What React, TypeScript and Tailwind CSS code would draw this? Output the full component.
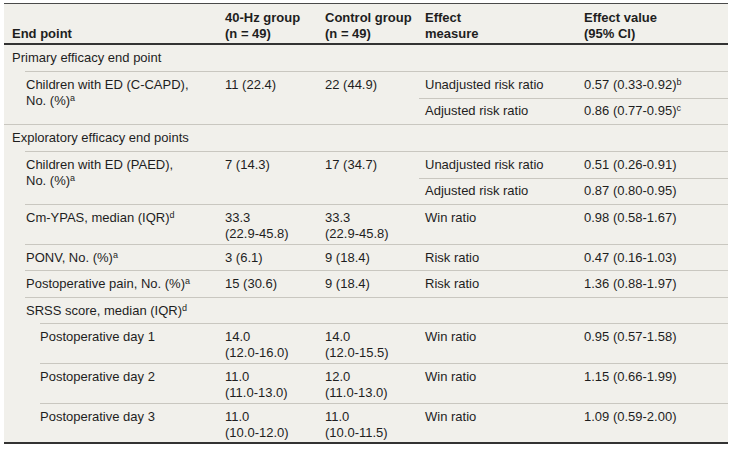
import React from "react";

const Sup = ({ c }: { c: string }) => <sup className="text-[9px]">{c}</sup>;

const D0 = () => <div className="h-px shrink-0 bg-[#c9c7c0]" />;
const D1 = () => <div className="h-px shrink-0 ml-[21px] bg-[#c9c7c0]" />;
const D2 = () => <div className="h-px shrink-0 ml-[36px] bg-[#c9c7c0]" />;

type CellProps = { children?: React.ReactNode };

const C2 = ({ children }: CellProps) => (
  <div className="w-[100px] shrink-0 pl-[6px] pt-[5px]">{children}</div>
);
const C3 = ({ children }: CellProps) => (
  <div className="w-[100px] shrink-0 pl-[6px] pt-[5px]">{children}</div>
);
const C4 = ({ children, pt = "pt-[5px]" }: CellProps & { pt?: string }) => (
  <div className={`w-[159px] shrink-0 pl-[6px] ${pt}`}>{children}</div>
);
const C5 = ({ children, pt = "pt-[5px]" }: CellProps & { pt?: string }) => (
  <div className={`w-[150px] shrink-0 pl-[6px] ${pt}`}>{children}</div>
);

function Section({ title }: { title: string }) {
  return (
    <div className="flex flex-col">
      <div className="h-[26px] pl-[8px] pt-[5px]">{title}</div>
      <D1 />
    </div>
  );
}

function SplitRow({
  label,
  a,
  b,
  r1,
  r2,
  divider,
}: {
  label: React.ReactNode;
  a: string;
  b: string;
  r1: [React.ReactNode, React.ReactNode];
  r2: [React.ReactNode, React.ReactNode];
  divider: React.ReactNode;
}) {
  return (
    <div className="flex flex-col">
      <div className="flex h-[52px]">
        <div className="w-[215px] shrink-0 pl-[22px] pt-[5px]">{label}</div>
        <C2>{a}</C2>
        <C3>{b}</C3>
        <div className="flex w-[309px] shrink-0 flex-col">
          <div className="flex h-[26px]">
            <C4>{r1[0]}</C4>
            <C5>{r1[1]}</C5>
          </div>
          <div className="h-px bg-[#c9c7c0]" />
          <div className="flex h-[25px]">
            <C4 pt="pt-[4px]">{r2[0]}</C4>
            <C5 pt="pt-[4px]">{r2[1]}</C5>
          </div>
        </div>
      </div>
      {divider}
    </div>
  );
}

function Row({
  h,
  pl,
  label,
  a,
  b,
  m,
  v,
  divider,
}: {
  h: string;
  pl: string;
  label: React.ReactNode;
  a?: React.ReactNode;
  b?: React.ReactNode;
  m?: React.ReactNode;
  v?: React.ReactNode;
  divider?: React.ReactNode;
}) {
  return (
    <div className="flex flex-col">
      <div className={`flex ${h}`}>
        <div className={`w-[215px] shrink-0 pt-[5px] ${pl}`}>{label}</div>
        <C2>{a}</C2>
        <C3>{b}</C3>
        <C4>{m}</C4>
        <C5>{v}</C5>
      </div>
      {divider}
    </div>
  );
}

export default function App() {
  return (
    <div className="min-h-[449px] w-[736px] bg-white pt-[3px] pl-[4px] font-['Liberation_Sans',Arial,sans-serif] text-[13px] leading-[16px] text-[#1e1e1e]">
      <div className="w-[724px] border-t border-b-2 border-t-[#4a4a4a] border-b-[#333333] bg-[#f1f0eb]">
        {/* Header */}
        <div className="flex h-[41px] border-b-2 border-[#333333] font-bold">
          <div className="flex w-[215px] shrink-0 flex-col justify-end pb-[1px] pl-[8px]">
            <div>End point</div>
          </div>
          <div className="flex w-[100px] shrink-0 flex-col justify-end pb-[1px] pl-[6px]">
            <div>40-Hz group</div>
            <div>(n = 49)</div>
          </div>
          <div className="flex w-[100px] shrink-0 flex-col justify-end pb-[1px] pl-[6px]">
            <div>Control group</div>
            <div>(n = 49)</div>
          </div>
          <div className="flex w-[159px] shrink-0 flex-col justify-end pb-[1px] pl-[6px]">
            <div>Effect</div>
            <div>measure</div>
          </div>
          <div className="flex w-[150px] shrink-0 flex-col justify-end pb-[1px] pl-[6px]">
            <div>Effect value</div>
            <div>(95% CI)</div>
          </div>
        </div>

        <Section title="Primary efficacy end point" />
        <SplitRow
          label={
            <>
              <div>Children with ED (C-CAPD),</div>
              <div>
                No. (%)<Sup c="a" />
              </div>
            </>
          }
          a="11 (22.4)"
          b="22 (44.9)"
          r1={[
            "Unadjusted risk ratio",
            <>
              0.57 (0.33-0.92)<Sup c="b" />
            </>,
          ]}
          r2={[
            "Adjusted risk ratio",
            <>
              0.86 (0.77-0.95)<Sup c="c" />
            </>,
          ]}
          divider={<D0 />}
        />

        <Section title="Exploratory efficacy end points" />
        <SplitRow
          label={
            <>
              <div>Children with ED (PAED),</div>
              <div>
                No. (%)<Sup c="a" />
              </div>
            </>
          }
          a="7 (14.3)"
          b="17 (34.7)"
          r1={["Unadjusted risk ratio", "0.51 (0.26-0.91)"]}
          r2={["Adjusted risk ratio", "0.87 (0.80-0.95)"]}
          divider={<D1 />}
        />
        <Row
          h="h-[39px]"
          pl="pl-[22px]"
          label={
            <>
              Cm-YPAS, median (IQR)<Sup c="d" />
            </>
          }
          a={
            <>
              <div>33.3</div>
              <div>(22.9-45.8)</div>
            </>
          }
          b={
            <>
              <div>33.3</div>
              <div>(22.9-45.8)</div>
            </>
          }
          m="Win ratio"
          v="0.98 (0.58-1.67)"
          divider={<D1 />}
        />
        <Row
          h="h-[25px]"
          pl="pl-[22px]"
          label={
            <>
              PONV, No. (%)<Sup c="a" />
            </>
          }
          a="3 (6.1)"
          b="9 (18.4)"
          m="Risk ratio"
          v="0.47 (0.16-1.03)"
          divider={<D1 />}
        />
        <Row
          h="h-[26px]"
          pl="pl-[22px]"
          label={
            <>
              Postoperative pain, No. (%)<Sup c="a" />
            </>
          }
          a="15 (30.6)"
          b="9 (18.4)"
          m="Risk ratio"
          v="1.36 (0.88-1.97)"
          divider={<D1 />}
        />
        <Row
          h="h-[25px]"
          pl="pl-[22px]"
          label={
            <>
              SRSS score, median (IQR)<Sup c="d" />
            </>
          }
          divider={<D2 />}
        />
        <Row
          h="h-[39px]"
          pl="pl-[36px]"
          label="Postoperative day 1"
          a={
            <>
              <div>14.0</div>
              <div>(12.0-16.0)</div>
            </>
          }
          b={
            <>
              <div>14.0</div>
              <div>(12.0-15.5)</div>
            </>
          }
          m="Win ratio"
          v="0.95 (0.57-1.58)"
          divider={<D2 />}
        />
        <Row
          h="h-[39px]"
          pl="pl-[36px]"
          label="Postoperative day 2"
          a={
            <>
              <div>11.0</div>
              <div>(11.0-13.0)</div>
            </>
          }
          b={
            <>
              <div>12.0</div>
              <div>(11.0-13.0)</div>
            </>
          }
          m="Win ratio"
          v="1.15 (0.66-1.99)"
          divider={<D2 />}
        />
        <Row
          h="h-[38px]"
          pl="pl-[36px]"
          label="Postoperative day 3"
          a={
            <>
              <div>11.0</div>
              <div>(10.0-12.0)</div>
            </>
          }
          b={
            <>
              <div>11.0</div>
              <div>(10.0-11.5)</div>
            </>
          }
          m="Win ratio"
          v="1.09 (0.59-2.00)"
        />
      </div>
    </div>
  );
}
